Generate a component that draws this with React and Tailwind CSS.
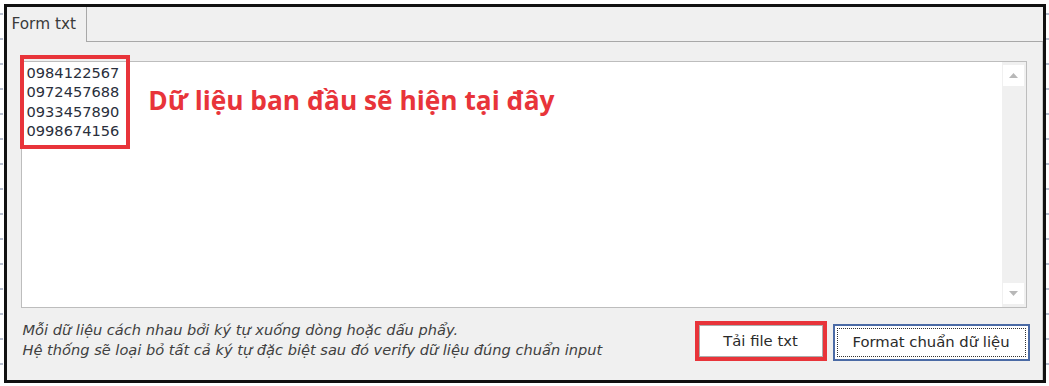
import React from "react";

const dots = Array.from({ length: 15 });

function DotColumn() {
  return (
    <div className="flex w-[3px] flex-col gap-[23px] pt-[13px]">
      {dots.map((_, i) => (
        <div key={i} className="h-[2px] w-[3px] bg-[#b7bfcf]" />
      ))}
    </div>
  );
}

function ScrollArrow({ up }) {
  return (
    <div className="flex h-[21px] w-[21px] items-center justify-center bg-white">
      <svg width="9" height="5" viewBox="0 0 9 5">
        {up ? (
          <polygon points="0,5 9,5 4.5,0" fill="#b8b8b8" />
        ) : (
          <polygon points="0,0 9,0 4.5,5" fill="#b8b8b8" />
        )}
      </svg>
    </div>
  );
}

export default function App() {
  const phones = ["0984122567", "0972457688", "0933457890", "0998674156"];

  return (
    <div className="flex h-[386px] w-[1049px] justify-between bg-white" style={{ fontFamily: "'DejaVu Sans', sans-serif" }}>
      <DotColumn />

      <div className="mt-[4px] flex h-[379px] w-[1042px] flex-col border-[3px] border-[#111] bg-[#f0f0f0]">
        {/* tab strip */}
        <div className="flex h-[35px] shrink-0">
          <div className="flex w-[80px] items-center border-r border-[#a8a8a8] pl-[5px] text-[15.3px] text-[#3a3a3a]">
            Form txt
          </div>
          <div className="flex-1 border-b border-[#a8a8a8]" />
        </div>

        {/* panel */}
        <div className="flex flex-1 flex-col border-r border-[#c8c8c8] px-[14px] pt-[19px]">
          <div className="flex h-[247px] w-[1006px] border border-[#bdbdbd] bg-white">
            <div className="relative flex-1">
              <div className="absolute left-[-2px] top-[-7px] h-[94px] w-[110px] border-[4px] border-[#e8343a]" />
              <div className="flex items-start pl-[5px] pt-[1px]">
                <div className="text-[14.6px] leading-[19.3px] text-[#2a2f3c]">
                  {phones.map((p) => (
                    <div key={p}>{p}</div>
                  ))}
                </div>
                <div
                  className="ml-[29px] mt-[21px] text-[26.3px] font-bold leading-[32px] text-[#e8343a]"
                  style={{ fontFamily: "'Open Sans', sans-serif" }}
                >
                  Dữ liệu ban đầu sẽ hiện tại đây
                </div>
              </div>
            </div>
            <div className="flex w-[24px] flex-col justify-between bg-[#f0f0f0] py-[3px] pl-[1px]">
              <ScrollArrow up />
              <ScrollArrow />
            </div>
          </div>

          <div className="mt-[12px] flex items-start justify-between">
            <div className="pl-[2px] text-[14.6px] italic leading-[19.5px] text-[#404040]">
              <div>Mỗi dữ liệu cách nhau bởi ký tự xuống dòng hoặc dấu phẩy.</div>
              <div>Hệ thống sẽ loại bỏ tất cả ký tự đặc biệt sau đó verify dữ liệu đúng chuẩn input</div>
            </div>

            <div className="mr-[-2px] flex items-start gap-[6px] pt-[1px]">
              <div className="border-[4px] border-[#e8343a]">
                <button className="flex h-[32px] w-[124px] items-center justify-center border border-[#adadad] bg-white text-[14.8px] text-[#2a2a2a]">
                  Tải file txt
                </button>
              </div>
              <button className="mt-[3px] h-[37px] w-[197px] border-[2px] border-[#4a6aa5] bg-white p-[2px] text-[14.8px] text-[#2a2a2a]">
                <div className="flex h-full items-center justify-center border border-dotted border-[#333]">
                  Format chuẩn dữ liệu
                </div>
              </button>
            </div>
          </div>
        </div>
      </div>

      <DotColumn />
    </div>
  );
}
